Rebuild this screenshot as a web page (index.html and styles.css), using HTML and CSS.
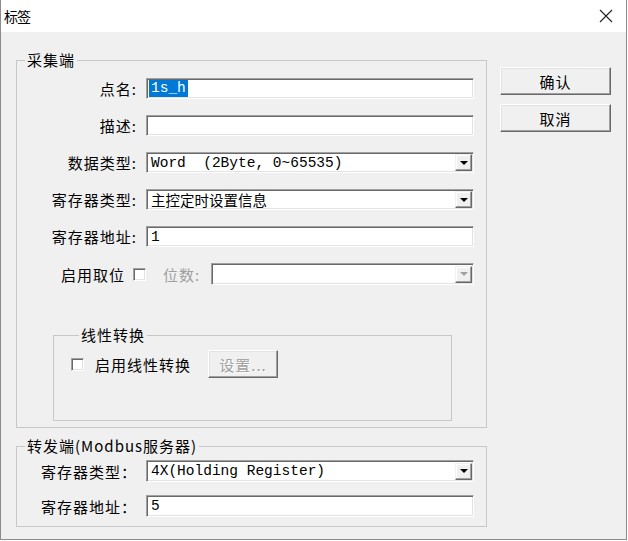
FILE: index.html
```html
<!DOCTYPE html>
<html>

<head>
	<title>标签</title>
	<link rel="stylesheet" href="styles.css">
</head>

<body>
	<div class="window">
		<div class="titlebar">
			<span class="title">标签</span>
			<svg class="close" width="14" height="14" viewBox="0 0 14 14">
				<path d="M1 1L13 13M13 1L1 13" stroke="#222" stroke-width="1.1" fill="none" />
			</svg>
		</div>
		<div class="content">
			<div class="left">
				<fieldset class="group collect">
					<legend>采集端</legend>
					<div class="row">
						<label>点名:</label>
						<div class="edit"><span class="sel">1s_h</span></div>
					</div>
					<div class="row">
						<label>描述:</label>
						<div class="edit"></div>
					</div>
					<div class="row">
						<label>数据类型:</label>
						<div class="edit combo">
							<span class="combo-text">Word&nbsp;&nbsp;(2Byte, 0~65535)</span>
							<span class="combo-btn"><i class="arrow"></i></span>
						</div>
					</div>
					<div class="row">
						<label>寄存器类型:</label>
						<div class="edit combo">
							<span class="combo-text">主控定时设置信息</span>
							<span class="combo-btn"><i class="arrow"></i></span>
						</div>
					</div>
					<div class="row">
						<label>寄存器地址:</label>
						<div class="edit">1</div>
					</div>
					<div class="row bits">
						<div class="bits-left">
							<span class="bits-label">启用取位</span>
							<span class="check"></span>
						</div>
						<span class="dim-label">位数:</span>
						<div class="edit combo small">
							<span class="combo-text"></span>
							<span class="combo-btn"><i class="arrow off"></i></span>
						</div>
					</div>
					<fieldset class="group linear">
						<legend>线性转换</legend>
						<div class="linear-row">
							<span class="check"></span>
							<span class="linear-label">启用线性转换</span>
							<span class="btn disabled">设置...</span>
						</div>
					</fieldset>
				</fieldset>
				<fieldset class="group forward">
					<legend>转发端(Modbus服务器)</legend>
					<div class="row">
						<label>寄存器类型：</label>
						<div class="edit combo">
							<span class="combo-text">4X(Holding Register)</span>
							<span class="combo-btn"><i class="arrow"></i></span>
						</div>
					</div>
					<div class="row">
						<label>寄存器地址：</label>
						<div class="edit">5</div>
					</div>
				</fieldset>
			</div>
			<div class="buttons">
				<span class="btn main-btn">确认</span>
				<span class="btn main-btn">取消</span>
			</div>
		</div>
	</div>
</body>

</html>
```
FILE: styles.css
```css
* {
	box-sizing: border-box;
}

html,
body {
	margin: 0;
	padding: 0;
}

body {
	width: 628px;
	height: 541px;
	background: #fff;
	font-family: "Noto Sans CJK SC", sans-serif;
	font-size: 15px;
	color: #000;
}

.window {
	width: 627px;
	height: 540px;
	display: flex;
	flex-direction: column;
	background: #f0f0f0;
	border: 1px solid #8c8c8c;
	border-top: 0;
}

.titlebar {
	height: 32px;
	flex: none;
	display: flex;
	align-items: center;
	justify-content: space-between;
	padding: 0 13px 0 3px;
	background: #fff;
}

.title {
	font-size: 14px;
	letter-spacing: -1px;
}

.content {
	display: flex;
	gap: 13px;
	padding: 18px 0 0 15px;
}

.left {
	width: 471px;
}

/* group boxes */
.group {
	margin: 0;
	padding: 0;
	min-width: 0;
	border: 1px solid #c8c8c8;
}

.group legend {
	margin-left: 8px;
	padding: 0 2px;
	line-height: 20px;
	letter-spacing: 1px;
}

.collect {
	padding: 8px 12px 6px 0;
}

.forward {
	margin-top: 8px;
	padding: 4px 12px 9px 0;
}

.row {
	display: flex;
	align-items: center;
	height: 21px;
	margin-bottom: 16px;
}

.forward .row {
	height: 22px;
	margin-bottom: 13px;
}

.row:last-child {
	margin-bottom: 0;
}

.row label {
	width: 129px;
	padding-right: 9px;
	text-align: right;
	letter-spacing: 1px;
	white-space: nowrap;
}

/* sunken edit boxes */
.edit {
	width: 328px;
	height: 100%;
	display: flex;
	align-items: center;
	padding-left: 4px;
	background: #fff;
	border: 1px solid;
	border-color: #a0a0a0 #fff #fff #a0a0a0;
	box-shadow: inset 1px 1px #696969, inset -1px -1px #e3e3e3;
	font-family: "Liberation Mono", "Noto Sans CJK SC", monospace;
	font-size: 14.5px;
	white-space: pre;
}

.sel {
	margin-left: -2px;
	padding: 0 2px;
	background: #0078d7;
	color: #fff;
	line-height: 17px;
}

.combo {
	padding-right: 1px;
}

.combo-text {
	flex: 1;
}

.combo-btn {
	width: 17px;
	height: 17px;
	display: flex;
	align-items: center;
	justify-content: center;
	background: #f0f0f0;
	border: 1px solid;
	border-color: #f0f0f0 #696969 #696969 #f0f0f0;
	box-shadow: inset -1px -1px #a0a0a0, inset 1px 1px #fff;
}

.arrow {
	width: 0;
	height: 0;
	border-left: 4px solid transparent;
	border-right: 4px solid transparent;
	border-top: 4px solid #000;
}

.arrow.off {
	border-top-color: #a0a0a0;
}

/* bit row */
.bits {
	height: 22px;
}

.bits-left {
	width: 129px;
	display: flex;
	align-items: center;
	justify-content: flex-end;
	gap: 8px;
}

.bits-label {
	letter-spacing: 1px;
}

.dim-label {
	margin-left: 17px;
	width: 48px;
	color: #a0a0a0;
	letter-spacing: 1px;
}

.edit.small {
	width: 263px;
}

.check {
	width: 13px;
	height: 13px;
	flex: none;
	background: #fff;
	border: 1px solid;
	border-color: #a0a0a0 #fff #fff #a0a0a0;
	box-shadow: inset 1px 1px #696969, inset -1px -1px #e3e3e3;
}

/* linear conversion */
.linear {
	width: 399px;
	margin: 40px 0 0 36px;
	padding: 5px 0 42px 17px;
}

.linear-row {
	display: flex;
	align-items: center;
}

.linear-label {
	margin-left: 11px;
	letter-spacing: 1px;
}

/* raised buttons */
.btn {
	height: 28px;
	display: flex;
	align-items: center;
	justify-content: center;
	background: #f0f0f0;
	border: 1px solid;
	border-color: #fff #696969 #696969 #fff;
	box-shadow: inset -1px -1px #a0a0a0, inset 1px 1px #e3e3e3;
	letter-spacing: 1px;
}

.btn.disabled {
	width: 70px;
	margin-left: 17px;
	color: #a0a0a0;
	text-shadow: 1px 1px #fff;
}

.buttons {
	display: flex;
	flex-direction: column;
	gap: 9px;
	margin-top: 17px;
}

.main-btn {
	width: 111px;
}
```
